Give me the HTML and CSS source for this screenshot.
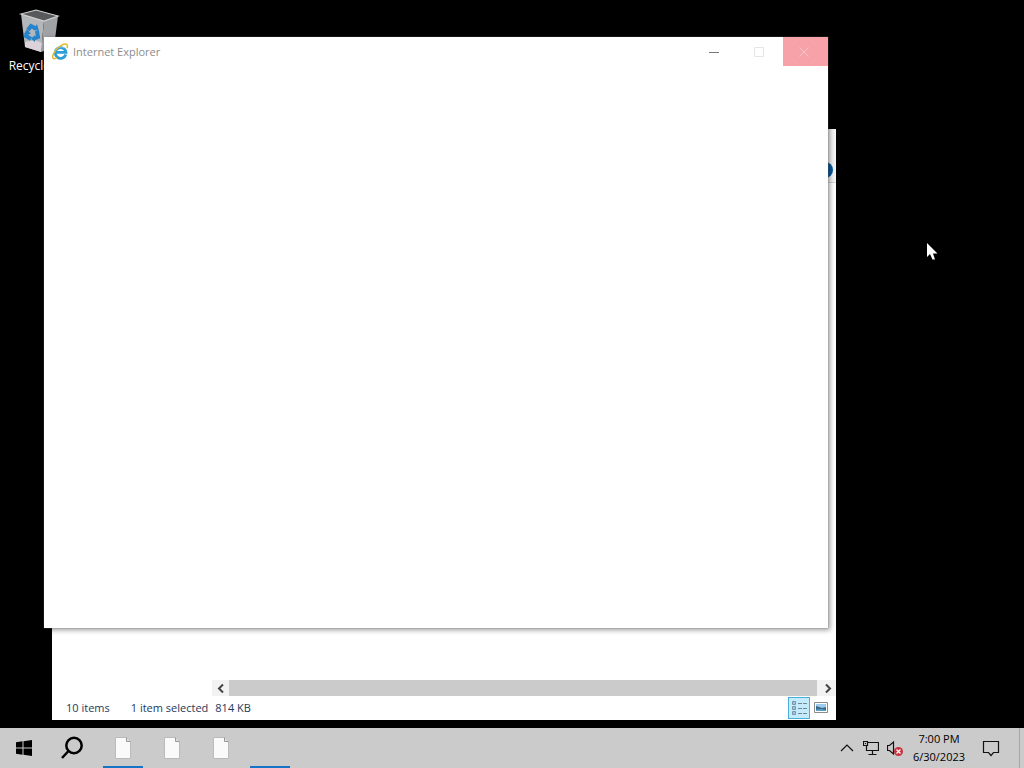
FILE: index.html
```html
<!DOCTYPE html>
<html lang="en">
<head>
<meta charset="utf-8">
<title>Desktop</title>
<link rel="stylesheet" href="styles.css">
</head>
<body>
<main class="desktop">
  <a class="shortcut" href="#recycle-bin">
    <svg class="bin" viewBox="0 0 48 48" aria-hidden="true">
      <path d="M5 8 28 15 25 46 9 41Z" fill="#b4b7ba"/>
      <path d="M28 15 42 10 38 41 25 46Z" fill="#a0a2a5"/>
      <path d="M9 36 18 34 26 37 25 46 9 41Z" fill="#dcd3da"/>
      <path d="M5 8 20 4 42 10 28 15Z" fill="#58595b" stroke="#d0d1d2" stroke-width="1.2"/>
      <g fill="none" stroke="#2583cc" stroke-width="4">
        <path d="M12 24 15 20 19 22"/><path d="M21 25 22 31 17 33"/><path d="M15 33 10 30 11 27"/>
      </g>
      <path d="M17 24 23 25 21 18ZM19 29 15 33 19 36ZM8 28 11 23 15 28Z" fill="#2583cc"/>
    </svg>
    <span>Recycle Bin</span>
  </a>

  <section class="window explorer" aria-label="File Explorer">
    <div class="ribbon">
      <button class="help" aria-label="Help"></button>
    </div>
    <div class="files">
      <div class="scrollbar">
        <button aria-label="Scroll left"><svg viewBox="0 0 16 16"><path d="M10 4.500 6 8.500 10 12.500"/></svg></button>
        <div class="thumb"></div>
        <button aria-label="Scroll right"><svg viewBox="0 0 16 16"><path d="M6 4.500 10 8.500 6 12.500"/></svg></button>
      </div>
    </div>
    <footer class="status">
      <span class="count">10 items</span>
      <span class="selected">1 item selected</span>
      <span>814 KB</span>
      <div class="views">
        <button class="view active" aria-label="Details view">
          <svg viewBox="0 0 20 20"><g fill="#fff" stroke="#7895a8"><path d="M3.500 3.500h3v3h-3zM3.500 8.500h3v3h-3zM3.500 13.500h3v3h-3z"/></g><path d="M9 5.500h4m1 0h4M9 10.500h4m1 0h4M9 15.500h4m1 0h4" stroke="#6f8794"/><path d="M4 5h2M4 10h2M4 15h2" stroke="#3d88bd"/></svg>
        </button>
        <button class="view" aria-label="Large icons view">
          <svg viewBox="0 0 20 20"><path d="M3.500 4.500h13v10h-13z" fill="#fff" stroke="#8b8b8b"/><path d="M5 6h10v7H5z" fill="#9ccbed"/><path d="M5 8 8 9 11 10 15 9v4H5z" fill="#386888"/><path d="M5 11.500 10 11 15 12v1H5z" fill="#5f9fc8"/></svg>
        </button>
      </div>
    </footer>
  </section>

  <section class="window browser" aria-label="Internet Explorer">
    <header class="titlebar">
      <svg class="ie" viewBox="0 0 18 18" aria-hidden="true">
        <path d="M14.600 12.200A5.700 5.700 0 1 1 14.800 9.900H5" fill="none" stroke="#2d9fd8" stroke-width="3"/>
        <path d="M4 8A5.500 5.500 0 0 1 12.500 5" fill="none" stroke="#84d2f1" stroke-width="1"/>
        <path d="M5 15.500C1 18.200-.5 15.500 1.800 11 5 4.800 12.500-.5 15.500 1.500 16.800 2.400 16.500 4 15.800 5.500" fill="none" stroke="#e5b92b" stroke-width="1.600"/>
      </svg>
      <h1>Internet Explorer</h1>
      <button class="control" aria-label="Minimize"><svg viewBox="0 0 12 12"><path d="M1 6.500h10" stroke="#777"/></svg></button>
      <button class="control" aria-label="Maximize" disabled><svg viewBox="0 0 12 12"><path d="M1.500 1.500h9v9h-9z" stroke="#e6e6e6"/></svg></button>
      <button class="control close" aria-label="Close"><svg viewBox="0 0 12 12"><path d="m1.500 1.500 9 9m0-9-9 9" stroke="#f7c5c9"/></svg></button>
    </header>
  </section>

  <svg class="pointer" viewBox="0 0 12 19" aria-hidden="true"><path d="M0 0v14l3-3L5.500 16.500H8L6 10.500h4.500Z" fill="#fff"/></svg>
</main>

<nav class="taskbar" aria-label="Taskbar">
  <button class="task start" aria-label="Start"><svg viewBox="0 0 16 16"><path d="M0 2.200 6.500 1.300V7.500H0ZM7.500 1.200 16 0v7.500H7.500ZM0 8.500h6.500v6.200L0 13.800ZM7.500 8.500H16V16L7.500 14.800Z"/></svg></button>
  <button class="task search" aria-label="Search"><svg viewBox="0 0 24 24"><circle cx="14" cy="9.500" r="7.700"/><path d="M8.500 15 2 22"/></svg></button>
  <button class="task open" aria-label="First application"><svg class="page" viewBox="0 0 16 22"><path d="M.5.500h11l4 4v17H.5z" fill="#fafafa" stroke="#bbb"/><path d="M11.500.500v4h4" fill="#ddd" stroke="#999"/></svg></button>
  <button class="task" aria-label="Second application"><svg class="page" viewBox="0 0 16 22"><path d="M.5.500h11l4 4v17H.5z" fill="#fafafa" stroke="#bbb"/><path d="M11.500.500v4h4" fill="#ddd" stroke="#999"/></svg></button>
  <button class="task" aria-label="Third application"><svg class="page" viewBox="0 0 16 22"><path d="M.5.500h11l4 4v17H.5z" fill="#fafafa" stroke="#bbb"/><path d="M11.500.500v4h4" fill="#ddd" stroke="#999"/></svg></button>
  <button class="task open" aria-label="Internet Explorer"></button>
  <div class="tray">
    <button aria-label="Show hidden icons"><svg viewBox="0 0 16 16"><path d="M2 11 8 5l6 6"/></svg></button>
    <button aria-label="Network"><svg viewBox="0 0 16 16"><path d="M5 2.500h10.500v8H3.500V6M9.500 11v3M5.500 14.500h8M.5 1.500h4v4h-4zM2 3.500h1"/></svg></button>
    <button aria-label="Volume unavailable"><svg viewBox="0 0 16 16"><path d="M.5 5.500h2L6.500 2v12L2.500 10.500h-2z"/><circle cx="11.500" cy="11.500" r="4.500" fill="#c9303d" stroke="none"/><path d="m9.500 9.500 4 4m0-4-4 4" stroke="#fff"/></svg></button>
    <button class="clock"><time datetime="2023-06-30T19:00">7:00 PM<br>6/30/2023</time></button>
    <button class="notes" aria-label="Notifications"><svg viewBox="0 0 18 18"><path d="M1.500 2.500h15v11h-5L9 16.500 6.500 13.500h-5z"/></svg></button>
    <button class="peek" aria-label="Show desktop"></button>
  </div>
</nav>
</body>
</html>
```

FILE: styles.css
```css
* { box-sizing: border-box; }

body {
  margin: 0;
  height: 100vh;
  display: flex;
  flex-direction: column;
  background: #000;
  color: #000;
  font: 11px/18px "Open Sans", "Noto Sans", sans-serif;
  overflow: hidden;
}

button {
  margin: 0;
  padding: 0;
  border: 0;
  background: none;
  color: inherit;
  font: inherit;
  display: flex;
  align-items: center;
  justify-content: center;
}

svg { display: block; flex: none; }

.desktop { position: relative; flex: 1; }

.shortcut {
  position: absolute;
  left: 1px;
  top: 6px;
  width: 78px;
  display: flex;
  flex-direction: column;
  align-items: center;
  gap: 3px;
  color: #fff;
  font-size: 12px;
  text-decoration: none;
  white-space: nowrap;
}

.bin { width: 48px; height: 48px; }

.window {
  position: absolute;
  display: flex;
  flex-direction: column;
  background: #fff;
}

.explorer {
  left: 52px;
  top: 129px;
  width: 784px;
  height: 591px;
}

.ribbon {
  height: 54px;
  padding: 33px 3px 0;
  display: flex;
  justify-content: flex-end;
  align-items: flex-start;
  background: #f5f5f5;
  border-bottom: 1px solid #d5d5d5;
}

.help {
  width: 16px;
  height: 16px;
  border-radius: 50%;
  background: #075a9f;
}

.files {
  flex: 1;
  display: flex;
  align-items: flex-end;
  padding-left: 160px;
}

.scrollbar {
  flex: 1;
  height: 16px;
  display: flex;
  background: #f2f2f2;
}

.scrollbar button { width: 17px; }
.scrollbar svg { width: 16px; height: 16px; fill: none; stroke: #444; stroke-width: 2; }
.thumb { flex: 1; margin-right: 2px; background: #cbcbcb; }

.status {
  height: 24px;
  display: flex;
  align-items: center;
  padding: 0 4px 0 14px;
  color: #1e395b;
}

.count { margin-right: 21px; }
.selected { margin-right: 7px; }

.views { display: flex; margin-left: auto; }
.view { width: 22px; height: 22px; }
.view svg { width: 20px; height: 20px; }
.active { background: #c5eafb; border: 1px solid #4aafd8; }

.browser {
  left: 44px;
  top: 37px;
  width: 784px;
  height: 591px;
  box-shadow: 0 0 1px #777, 2px 2px 5px rgba(0, 0, 0, 0.4);
}

.titlebar { display: flex; height: 29px; padding-left: 8px; align-items: center; }
.titlebar h1 { flex: 1; margin: 0 0 0 4px; font: inherit; color: #8c8c8c; }
.ie { width: 17px; height: 17px; }
.control { width: 45px; height: 29px; padding-right: 3px; }
.control svg { width: 12px; height: 12px; fill: none; }
.close { background: #f7a1a8; }

.pointer { position: absolute; left: 927px; top: 243px; width: 12px; height: 19px; }

.taskbar { height: 40px; display: flex; background: #cbcbcb; }
.task { width: 40px; height: 40px; margin-right: 9px; }
.start { width: 48px; margin: 0; }
.start svg { width: 16px; height: 16px; }
.search { width: 48px; margin-right: 7px; }
.search svg { width: 24px; height: 24px; fill: none; stroke: #000; stroke-width: 2.500; }
.open { border-bottom: 2px solid #1574c4; padding-top: 2px; }
.page { width: 16px; height: 22px; }

.tray { display: flex; margin-left: auto; }
.tray button { width: 24px; height: 40px; }
.tray svg { width: 16px; height: 16px; fill: none; stroke: #111; stroke-width: 1.200; }
.tray .clock { width: 64px; }
.tray .notes { width: 40px; }
.tray .notes svg { width: 18px; height: 18px; }
.tray .peek { width: 5px; margin-left: 8px; border-left: 1px solid #a7a7a7; }
```
